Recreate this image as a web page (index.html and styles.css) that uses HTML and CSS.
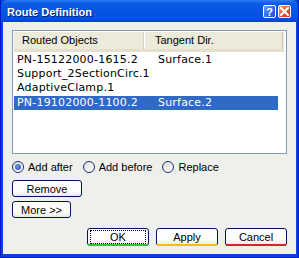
FILE: index.html
```html
<!DOCTYPE html>
<html lang="en">
<head>
    <meta charset="UTF-8">
    <title>Route Definition</title>
    <link rel="stylesheet" href="styles.css">
</head>
<body>
    <div class="window">
        <div class="titlebar">
            <span class="title">Route Definition</span>
            <div class="caption-buttons">
                <span class="cap-btn help-btn">?</span>
                <span class="cap-btn close-btn">
                    <svg width="9" height="9" viewBox="0 0 9 9"><path d="M1 1 L8 8 M8 1 L1 8" stroke="#fff" stroke-width="2" stroke-linecap="square"/></svg>
                </span>
            </div>
        </div>
        <div class="client">
            <!--List of routed objects-->
            <div class="listview">
                <div class="lv-header">
                    <div class="lv-col col-obj">Routed Objects</div>
                    <div class="lv-col col-dir">Tangent Dir.</div>
                </div>
                <div class="lv-row">
                    <span class="cell-obj">PN-15122000-1615.2</span>
                    <span class="cell-dir">Surface.1</span>
                </div>
                <div class="lv-row">
                    <span class="cell-obj">Support_2SectionCirc.1</span>
                    <span class="cell-dir"></span>
                </div>
                <div class="lv-row">
                    <span class="cell-obj">AdaptiveClamp.1</span>
                    <span class="cell-dir"></span>
                </div>
                <div class="lv-row selected">
                    <span class="cell-obj">PN-19102000-1100.2</span>
                    <span class="cell-dir">Surface.2</span>
                </div>
            </div>
            <!--Insert mode-->
            <div class="radio-row">
                <label class="radio"><span class="radio-dot checked"></span>Add after</label>
                <label class="radio"><span class="radio-dot"></span>Add before</label>
                <label class="radio"><span class="radio-dot"></span>Replace</label>
            </div>
            <div class="side-buttons">
                <button class="xp-btn remove-btn">Remove</button>
                <button class="xp-btn more-btn">More &gt;&gt;</button>
            </div>
            <div class="footer">
                <button class="xp-btn footer-btn ok-btn"><span class="focus">OK</span></button>
                <button class="xp-btn footer-btn apply-btn">Apply</button>
                <button class="xp-btn footer-btn cancel-btn">Cancel</button>
            </div>
        </div>
    </div>
</body>
</html>
```

FILE: styles.css
```css
html, body {
    margin: 0;
    padding: 0;
}
body {
    width: 299px;
    height: 258px;
    font-family: 'Liberation Sans', Arial, sans-serif;
    font-size: 11px;
    color: #000;
}
.window {
    width: 299px;
    height: 258px;
    box-sizing: border-box;
    background-color: #0842d8;
    border: 1px solid #0019cf;
    border-top: none;
    display: flex;
    flex-direction: column;
}
.titlebar {
    height: 22px;
    flex: none;
    display: flex;
    align-items: center;
    justify-content: space-between;
    padding: 0 7px 0 6px;
    background: linear-gradient(#2f7ef4 0%, #0b5ce5 15%, #0355e3 50%, #0451dc 85%, #0842c8 100%);
    border-radius: 6px 6px 0 0;
}
.title {
    color: #fff;
    font-weight: bold;
    font-size: 11px;
    text-shadow: 1px 1px 0 #0a1e7a;
    margin-top: 1px;
}
.caption-buttons {
    display: flex;
    gap: 2px;
    margin-top: 1px;
}
.cap-btn {
    width: 13px;
    height: 13px;
    box-sizing: border-box;
    border: 1px solid #fff;
    border-radius: 2px;
    display: flex;
    align-items: center;
    justify-content: center;
    color: #fff;
    font-weight: bold;
    font-size: 11px;
}
.help-btn {
    background: linear-gradient(135deg, #6e9cf8, #2766e8 60%, #1d4fd0);
}
.close-btn {
    background: linear-gradient(135deg, #f0a080, #e2552e 55%, #c33a14);
}
.client {
    flex: 1;
    margin: 0 2px 3px 2px;
    background-color: #efefeb;
    padding: 8px 9px 0 9px;
    display: flex;
    flex-direction: column;
}
.listview {
    height: 124px;
    box-sizing: border-box;
    border: 1px solid #7f9db9;
    background: #fff;
    padding: 1px 2px 0 1px;
}
.lv-header {
    display: flex;
    height: 17px;
    background: #ebeadb;
    border-bottom: 3px solid #e2dfcb;
    box-sizing: content-box;
    margin-bottom: 1px;
}
.lv-col {
    box-sizing: border-box;
    padding-left: 8px;
    line-height: 17px;
    font-size: 11px;
    border-right: 1px solid #cbc7b8;
}
.col-obj {
    width: 131px;
    border-right: 1px solid #fff;
    box-shadow: inset -1px 0 0 #d6d2c2;
}
.col-dir {
    width: 138px;
    padding-left: 10px;
}
.lv-row {
    display: flex;
    height: 14px;
    font-family: 'DejaVu Sans', Verdana, sans-serif;
    font-size: 11px;
    letter-spacing: 0.2px;
    line-height: 14px;
    width: 264px;
}
.cell-obj {
    width: 139px;
    padding-left: 3px;
    white-space: nowrap;
}
.cell-dir {
    padding-left: 2px;
}
.lv-row.selected {
    margin-top: 1px;
    background: #316ac5;
    color: #fff;
}
.radio-row {
    display: flex;
    align-items: center;
    gap: 10px;
    margin-top: 6px;
    height: 13px;
}
.radio {
    display: flex;
    align-items: center;
    gap: 4px;
}
.radio-dot {
    width: 12px;
    height: 12px;
    box-sizing: border-box;
    border-radius: 50%;
    border: 1px solid #1c2c7c;
    background: linear-gradient(135deg, #dcdcd6, #fff);
    position: relative;
}
.radio-dot.checked::after {
    content: "";
    position: absolute;
    left: 2px;
    top: 2px;
    width: 6px;
    height: 6px;
    border-radius: 50%;
    background: radial-gradient(circle at 40% 40%, #6d9ae6, #21469c);
}
.side-buttons {
    display: flex;
    flex-direction: column;
    align-items: flex-start;
    gap: 4px;
    margin-top: 7px;
}
.xp-btn {
    font-family: 'Liberation Sans', Arial, sans-serif;
    font-size: 11px;
    color: #000;
    height: 17px;
    box-sizing: border-box;
    border: 1px solid #00155e;
    border-radius: 3px;
    background: linear-gradient(#fff, #fcfcfb 70%, #eae8e0);
    padding: 0;
    position: relative;
}
.remove-btn {
    width: 70px;
}
.more-btn {
    width: 59px;
}
.footer {
    display: flex;
    justify-content: flex-end;
    gap: 7px;
    margin-top: 10px;
}
.footer-btn {
    width: 62px;
    height: 18px;
}
.footer-btn::after {
    content: "";
    position: absolute;
    left: 0;
    right: 0;
    bottom: -1px;
    height: 2px;
}
.ok-btn::after {
    background: #2ec52e;
}
.apply-btn::after {
    background: #f2c200;
}
.cancel-btn::after {
    background: #e3202a;
}
.focus {
    display: block;
    margin: 1px 2px;
    border: 1px dotted #000;
    line-height: 12px;
}
```
